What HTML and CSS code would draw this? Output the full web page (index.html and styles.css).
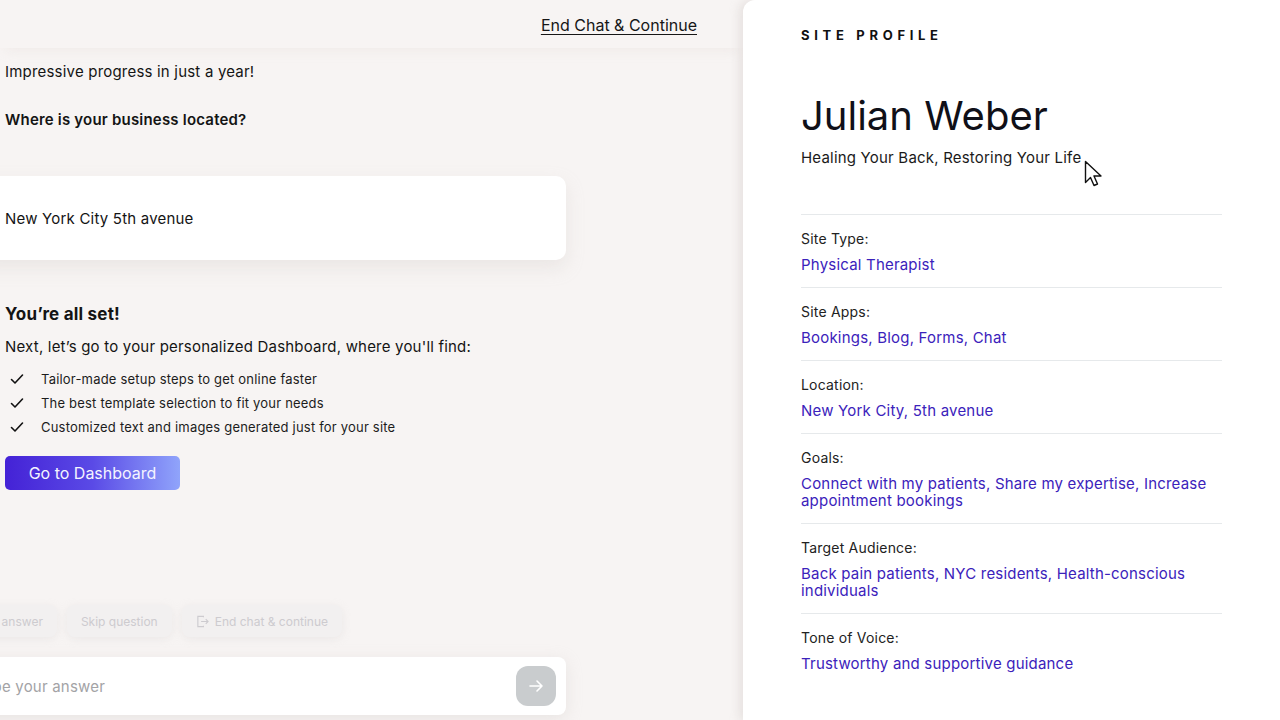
FILE: index.html
```html
<!DOCTYPE html>
<html lang="en">

<head>
    <meta charset="UTF-8">
    <meta name="viewport" content="width=device-width, initial-scale=1.0">
    <title>Site Setup Chat</title>
    <link rel="stylesheet" href="styles.css">
</head>

<body>
    <div class="layout">
        <div class="chat-column">
            <div class="chat-header">
                <a class="end-link" href="#">End Chat &amp; Continue</a>
            </div>
            <div class="chat-thread">
                <div class="bot-text first">Impressive progress in just a year!</div>
                <div class="bot-text question">Where is your business located?</div>
                <div class="user-card">New York City 5th avenue</div>
                <div class="done-title">You’re all set!</div>
                <div class="bot-text next">Next, let’s go to your personalized Dashboard, where you'll find:</div>
                <ul class="check-list">
                    <li>
                        <svg class="check" width="14" height="12" viewBox="0 0 14 12" fill="none" stroke="#111" stroke-width="1.6" stroke-linecap="round" stroke-linejoin="round">
                            <path d="M1.5 6.5 5 10l7.5-8" />
                        </svg>
                        Tailor-made setup steps to get online faster
                    </li>
                    <li>
                        <svg class="check" width="14" height="12" viewBox="0 0 14 12" fill="none" stroke="#111" stroke-width="1.6" stroke-linecap="round" stroke-linejoin="round">
                            <path d="M1.5 6.5 5 10l7.5-8" />
                        </svg>
                        The best template selection to fit your needs
                    </li>
                    <li>
                        <svg class="check" width="14" height="12" viewBox="0 0 14 12" fill="none" stroke="#111" stroke-width="1.6" stroke-linecap="round" stroke-linejoin="round">
                            <path d="M1.5 6.5 5 10l7.5-8" />
                        </svg>
                        Customized text and images generated just for your site
                    </li>
                </ul>
                <button class="dashboard-button">Go to Dashboard</button>

                <div class="composer">
                    <div class="chip-row">
                        <div class="chip">Change answer</div>
                        <div class="chip">Skip question</div>
                        <div class="chip">
                            <svg width="13" height="13" viewBox="0 0 14 14" fill="none" stroke="currentColor" stroke-width="1.2">
                                <path d="M8 2.5V1.5H2v11h6v-1" />
                                <path d="M5.5 7h7.5M10.5 4.5 13 7l-2.5 2.5" />
                            </svg>
                            End chat &amp; continue
                        </div>
                    </div>
                    <div class="answer-box">
                        <span class="placeholder">Type your answer</span>
                        <button class="send-button">
                            <svg width="18" height="18" viewBox="0 0 18 18" fill="none" stroke="#fff" stroke-width="1.6" stroke-linecap="round" stroke-linejoin="round">
                                <path d="M3 9h12M10 4l5 5-5 5" />
                            </svg>
                        </button>
                    </div>
                </div>
            </div>
        </div>

        <div class="profile-panel">
            <div class="profile-kicker">SITE PROFILE</div>
            <h1 class="profile-name">Julian Weber</h1>
            <div class="profile-tagline">Healing Your Back, Restoring Your Life</div>

            <div class="profile-row">
                <div class="row-label">Site Type:</div>
                <div class="row-value">Physical Therapist</div>
            </div>
            <div class="profile-row">
                <div class="row-label">Site Apps:</div>
                <div class="row-value">Bookings, Blog, Forms, Chat</div>
            </div>
            <div class="profile-row">
                <div class="row-label">Location:</div>
                <div class="row-value">New York City, 5th avenue</div>
            </div>
            <div class="profile-row">
                <div class="row-label">Goals:</div>
                <div class="row-value">Connect with my patients, Share my expertise, Increase appointment bookings</div>
            </div>
            <div class="profile-row">
                <div class="row-label">Target Audience:</div>
                <div class="row-value">Back pain patients, NYC residents, Health-conscious individuals</div>
            </div>
            <div class="profile-row last">
                <div class="row-label">Tone of Voice:</div>
                <div class="row-value">Trustworthy and supportive guidance</div>
            </div>

            <!-- mouse pointer -->
            <svg class="pointer" width="18" height="28" viewBox="0 0 18 28">
                <path d="M1.5 1.5v21l5-5 3.5 8 3.5-1.5-3.5-8h7z" fill="#fff" stroke="#111" stroke-width="1.4" stroke-linejoin="round" />
            </svg>
        </div>
    </div>
</body>

</html>
```

FILE: styles.css
```css
body {
    margin: 0;
    background-color: #f7f4f3;
    font-family: 'Inter', 'Noto Sans', sans-serif;
    letter-spacing: 0.2px;
    color: #141414;
    overflow: hidden;
}

.layout {
    display: grid;
    grid-template-columns: 743px 1fr;
    height: 720px;
}

/* left side: chat */

.chat-column {
    display: flex;
    flex-direction: column;
    min-width: 0;
}

.chat-header {
    height: 48px;
    display: flex;
    align-items: center;
    justify-content: flex-end;
    padding-right: 46px;
    box-shadow: 0 8px 12px -6px rgba(225, 215, 213, 0.35);
}

.end-link {
    color: #161616;
    font-size: 16px;
    letter-spacing: 0;
    line-height: 22px;
    margin-top: 2px;
    text-decoration: underline;
    text-underline-offset: 3px;
}

.chat-thread {
    flex: 1;
    display: flex;
    flex-direction: column;
    width: 561px;
    padding-left: 5px;
    padding-bottom: 5px;
}

.bot-text {
    font-size: 15px;
    line-height: 22px;
}

.bot-text.first {
    margin-top: 13px;
}

.bot-text.question {
    margin-top: 26px;
    font-weight: 600;
}

.user-card {
    margin-top: 45px;
    margin-left: -29px;
    padding-left: 29px;
    height: 84px;
    display: flex;
    align-items: center;
    background-color: #fff;
    border-radius: 10px;
    font-size: 15px;
    box-shadow: 0 8px 18px rgba(200, 190, 188, 0.25);
}

.done-title {
    margin-top: 42px;
    font-size: 17px;
    line-height: 24px;
    font-weight: 700;
}

.bot-text.next {
    margin-top: 10px;
}

.check-list {
    list-style: none;
    margin: 9px 0 0;
    padding: 0;
}

.check-list li {
    display: flex;
    align-items: center;
    font-size: 13px;
    line-height: 24px;
    color: #1c1c1c;
}

.check {
    margin-left: 5px;
    margin-right: 17px;
    flex-shrink: 0;
}

.dashboard-button {
    margin-top: 17px;
    align-self: flex-start;
    width: 175px;
    height: 34px;
    padding: 0;
    border: none;
    border-radius: 5px;
    background: linear-gradient(90deg, #4422d6 0%, #5a4ae6 50%, #90a4fb 100%);
    color: #f4f4ff;
    font-family: inherit;
    font-size: 16px;
    letter-spacing: 0;
    cursor: pointer;
}

.composer {
    margin-top: auto;
}

.chip-row {
    display: flex;
    justify-content: flex-end;
    gap: 10px;
    width: 337px;
    margin-bottom: 20px;
}

.chip {
    flex-shrink: 0;
    display: flex;
    align-items: center;
    gap: 6px;
    height: 32px;
    padding: 0 14px;
    border-radius: 8px;
    background-color: #f2f0f0;
    color: #cdcbcf;
    font-size: 12px;
    letter-spacing: 0;
    box-shadow: 0 2px 8px rgba(210, 205, 205, 0.3);
}

.answer-box {
    display: flex;
    align-items: center;
    justify-content: space-between;
    margin-left: -50px;
    height: 58px;
    padding: 0 10px 0 20px;
    background-color: #fff;
    border-radius: 8px;
    box-shadow: 0 4px 16px rgba(200, 192, 190, 0.3);
}

.placeholder {
    color: #a3a3a6;
    font-size: 15px;
}

.send-button {
    width: 40px;
    height: 40px;
    padding: 0;
    border: none;
    border-radius: 12px;
    background-color: #c9ccce;
    display: flex;
    align-items: center;
    justify-content: center;
}

/* right side: site profile */

.profile-panel {
    position: relative;
    background-color: #fff;
    border-top-left-radius: 12px;
    padding: 26px 58px 0;
    box-shadow: -4px 0 10px rgba(200, 192, 190, 0.35);
}

.profile-kicker {
    font-size: 13px;
    font-weight: 700;
    letter-spacing: 4.7px;
    line-height: 18px;
    color: #111;
}

.profile-name {
    margin: 48px 0 0;
    font-size: 40px;
    font-weight: 400;
    letter-spacing: 0;
    line-height: 48px;
    color: #101018;
}

.profile-tagline {
    margin-top: 8px;
    font-size: 15px;
    line-height: 20px;
    color: #1a1a1a;
    padding-bottom: 46px;
    border-bottom: 1px solid #e6e9eb;
}

.profile-row {
    padding: 15px 0 14px;
    border-bottom: 1px solid #e6e9eb;
}

.profile-row.last {
    border-bottom: none;
}

.row-label {
    font-size: 14px;
    line-height: 18px;
    color: #222;
    margin-bottom: 8px;
}

.row-value {
    font-size: 15px;
    line-height: 17px;
    font-weight: 400;
    color: #3b22bb;
}

.pointer {
    position: absolute;
    left: 341px;
    top: 160px;
}
```
